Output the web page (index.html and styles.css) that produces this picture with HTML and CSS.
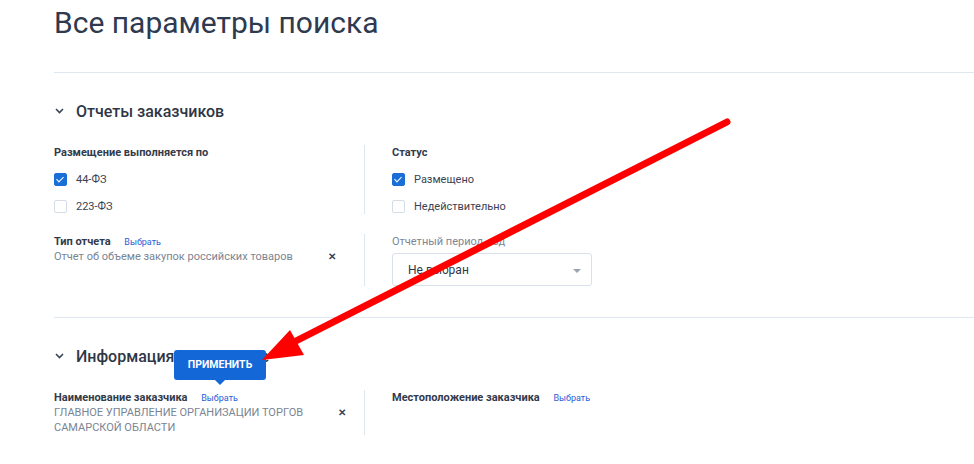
FILE: index.html
```html
<!DOCTYPE html>
<html lang="ru">
  <head>
    <meta charset="UTF-8" />
    <meta name="viewport" content="width=device-width, initial-scale=1.0" />
    <title>Все параметры поиска</title>
    <link rel="stylesheet" href="styles.css">
  </head>
  <body>
    <div class="page">
      <h1 class="title">Все параметры поиска</h1>
      <hr class="divider" />

      <section class="group">
        <div class="group-head">
          <svg class="chevron" width="9" height="6" viewBox="0 0 9 6"><path d="M1 1l3.5 3.5L8 1" fill="none" stroke="#3a4354" stroke-width="1.6"/></svg>
          <span>Отчеты заказчиков</span>
        </div>
        <div class="grid">
          <div class="cell cell-checks">
            <div class="label">Размещение выполняется по</div>
            <div class="option"><span class="box checked"></span>44-ФЗ</div>
            <div class="option"><span class="box"></span>223-ФЗ</div>
          </div>
          <div class="cell cell-right cell-checks">
            <div class="label">Статус</div>
            <div class="option"><span class="box checked"></span>Размещено</div>
            <div class="option"><span class="box"></span>Недействительно</div>
          </div>
          <div class="cell">
            <div class="label">Тип отчета <a class="pick">Выбрать</a></div>
            <div class="value-row">
              <div class="value">Отчет об объеме закупок российских товаров</div>
              <span class="clear">&#x2715;</span>
            </div>
          </div>
          <div class="cell cell-right">
            <div class="label muted">Отчетный период, год</div>
            <div class="select">Не выбран<span class="caret"></span></div>
          </div>
        </div>
      </section>

      <hr class="divider" />

      <section class="group">
        <div class="group-head">
          <svg class="chevron" width="9" height="6" viewBox="0 0 9 6"><path d="M1 1l3.5 3.5L8 1" fill="none" stroke="#3a4354" stroke-width="1.6"/></svg>
          <span>Информация о заказчике</span>
        </div>
        <div class="grid">
          <div class="cell">
            <div class="label">Наименование заказчика <a class="pick">Выбрать</a></div>
            <div class="value-row">
              <div class="value caps">ГЛАВНОЕ УПРАВЛЕНИЕ ОРГАНИЗАЦИИ ТОРГОВ<br />САМАРСКОЙ ОБЛАСТИ</div>
              <span class="clear">&#x2715;</span>
            </div>
          </div>
          <div class="cell cell-right">
            <div class="label">Местоположение заказчика <a class="pick">Выбрать</a></div>
          </div>
        </div>
      </section>
    </div>

    <div class="tooltip">ПРИМЕНИТЬ</div>

    <svg class="arrow" width="974" height="464" viewBox="0 0 974 464">
      <line x1="727" y1="122" x2="292" y2="343" stroke="#ff0000" stroke-width="7" stroke-linecap="round"/>
      <polygon points="262,360 290,330 304,355" fill="#ff0000"/>
    </svg>
  </body>
</html>
```

FILE: styles.css
```css
* {
  box-sizing: border-box;
}

body {
  margin: 0;
  font-family: Roboto, "Liberation Sans", sans-serif;
  color: #3a4354;
  background: #fff;
  position: relative;
  height: 464px;
  overflow: hidden;
}

.page {
  padding-left: 54px;
}

.title {
  margin: 0;
  padding-top: 4px;
  font-size: 30px;
  line-height: 37px;
  font-weight: 400;
  color: #2f3a4f;
}

.divider {
  margin: 31px 0 0;
  border: none;
  border-top: 1px solid #dfe7f1;
}

.group {
  padding-top: 27px;
}

.group-head {
  display: flex;
  align-items: center;
  height: 22px;
  font-size: 16px;
  font-weight: 500;
  color: #2f3747;
}

.chevron {
  margin-left: 1px;
  margin-right: 12px;
}

.grid {
  display: grid;
  grid-template-columns: 310px 1fr;
  row-gap: 20px;
  margin-top: 23px;
}

.cell-right {
  border-left: 1px solid #dfe6f0;
  padding-left: 27px;
}

.label {
  font-size: 11px;
  font-weight: 700;
  line-height: 16px;
  color: #333a4a;
}

.label.muted {
  font-weight: 400;
  color: #7c8696;
}

.pick {
  margin-left: 11px;
  font-size: 9px;
  font-weight: 400;
  color: #2860d8;
  cursor: pointer;
}

.cell-checks .label {
  margin-bottom: 10px;
}

.option {
  display: flex;
  align-items: center;
  height: 16px;
  font-size: 11px;
  color: #3a4354;
}

.option + .option {
  margin-top: 11px;
}

.box {
  width: 13px;
  height: 13px;
  margin-right: 9px;
  border: 1px solid #d5dce6;
  border-radius: 2px;
  position: relative;
}

.box.checked {
  background: #1a6ed8;
  border-color: #1a6ed8;
}

.box.checked::after {
  content: "";
  position: absolute;
  left: 3px;
  top: 1px;
  width: 3px;
  height: 6px;
  border: solid #fff;
  border-width: 0 1.6px 1.6px 0;
  transform: rotate(45deg);
}

.value-row {
  display: flex;
  align-items: flex-start;
}

.value {
  font-size: 11px;
  line-height: 14px;
  color: #7a8494;
}

.value.caps {
  line-height: 14.5px;
}

.clear {
  margin-left: 35px;
  font-size: 10px;
  line-height: 14px;
  font-weight: 700;
  color: #3a4354;
}

.select {
  position: relative;
  display: flex;
  align-items: center;
  width: 200px;
  height: 33px;
  margin-top: 3px;
  padding-left: 15px;
  border: 1px solid #d8e0ea;
  border-radius: 3px;
  font-size: 12px;
  color: #2f3747;
}

.caret {
  position: absolute;
  right: 10px;
  top: 15px;
  border-left: 4px solid transparent;
  border-right: 4px solid transparent;
  border-top: 4px solid #9aa3b2;
}

.tooltip {
  position: absolute;
  left: 174px;
  top: 350px;
  width: 92px;
  height: 30px;
  line-height: 30px;
  text-align: center;
  background: #1467d6;
  color: #fff;
  font-size: 10.5px;
  font-weight: 700;
  border-radius: 3px;
}

.tooltip::after {
  content: "";
  position: absolute;
  left: 41px;
  bottom: -5px;
  border-left: 5px solid transparent;
  border-right: 5px solid transparent;
  border-top: 5px solid #1467d6;
}

.arrow {
  position: absolute;
  left: 0;
  top: 0;
  pointer-events: none;
}
```
